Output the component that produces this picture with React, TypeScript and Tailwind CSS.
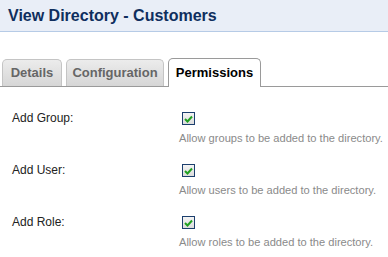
const rows = [
  { label: "Add Group:", help: "Allow groups to be added to the directory." },
  { label: "Add User:", help: "Allow users to be added to the directory." },
  { label: "Add Role:", help: "Allow roles to be added to the directory." },
];

function Check() {
  return (
    <div className="w-[13px] h-[13px] border border-[#1c3f6e] bg-gradient-to-b from-[#f4f4f4] to-[#dcdcdc] flex items-center justify-center">
      <svg width="9" height="8" viewBox="0 0 9 8">
        <path d="M1 4 L3.5 6.5 L8 1.5" stroke="#21a121" strokeWidth="2" fill="none" />
      </svg>
    </div>
  );
}

export default function App() {
  return (
    <div className="w-[388px] h-[257px] bg-white font-['Liberation_Sans',Arial,sans-serif] overflow-hidden">
      <div className="h-[32px] bg-[#e9eef7] border-b border-[#b6cbe6] px-[8px] flex items-center">
        <h1 className="text-[16px] font-bold text-[#0f2e5e]">View Directory - Customers</h1>
      </div>
      <div className="mt-[26px] flex items-end border-b border-[#9a9a9a] pl-[2px] h-[29px]">
        <div className="h-[27px] w-[60px] mr-[4px] rounded-t-[5px] border border-b-0 border-[#c4c4c4] bg-gradient-to-b from-[#ececec] to-[#d6d6d6] flex items-center justify-center text-[13px] font-bold text-[#666]">
          Details
        </div>
        <div className="h-[27px] w-[98px] mr-[4px] rounded-t-[5px] border border-b-0 border-[#c4c4c4] bg-gradient-to-b from-[#ececec] to-[#d6d6d6] flex items-center justify-center text-[13px] font-bold text-[#666]">
          Configuration
        </div>
        <div className="h-[29px] w-[93px] -mb-px rounded-t-[5px] border border-b-0 border-[#9a9a9a] bg-white flex items-center justify-center text-[13px] font-bold text-black">
          Permissions
        </div>
      </div>
      <div className="pt-[24px]">
        {rows.map((r) => (
          <div key={r.label} className="flex h-[52px]">
            <div className="w-[179px] pl-[12px] text-[12px] text-[#222] leading-[14px]">{r.label}</div>
            <div className="flex flex-col">
              <div className="pl-[3px] pt-[1px]">
                <Check />
              </div>
              <div className="mt-[7px] text-[11.1px] text-[#8a8a8a] leading-[13px]">{r.help}</div>
            </div>
          </div>
        ))}
      </div>
    </div>
  );
}
